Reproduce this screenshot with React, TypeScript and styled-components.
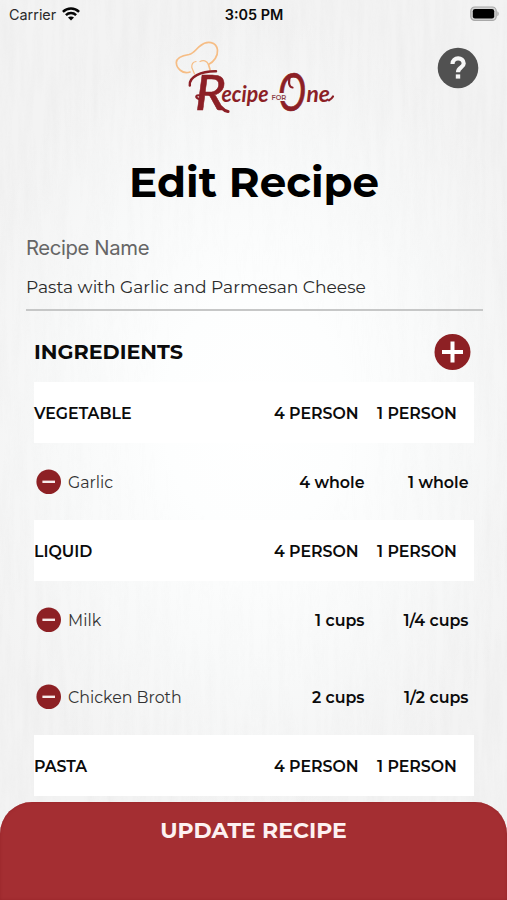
import React from "react";
import styled, { createGlobalStyle } from "styled-components";

const GlobalStyle = createGlobalStyle`
  * { box-sizing: border-box; }
  body { margin: 0; background: #f1f1f1; }
`;

const Screen = styled.div`
  position: relative;
  isolation: isolate;
  display: flex;
  flex-direction: column;
  width: 507px;
  height: 900px;
  overflow: hidden;
  color: #0b0b0b;
  font-family: "Montserrat", "Inter", sans-serif;
  background: radial-gradient(ellipse 300px 400px at 255px 415px, #ffffff 0%, #fdfefe 30%, #f8f9f9 65%, #f3f3f3 100%);
`;

const Grain = styled.svg`
  position: absolute;
  inset: 0;
  z-index: -1;
  width: 100%;
  height: 100%;
  opacity: 0.45;
  mask-image: radial-gradient(ellipse 320px 420px at 255px 415px, transparent 25%, #000 100%);
`;

const StatusBar = styled.header`
  display: grid;
  grid-template-columns: 1fr auto 1fr;
  align-items: center;
  height: 28px;
  padding: 0 8px 0 9px;
  font-family: "Inter", sans-serif;
  font-size: 14.4px;
`;

const Carrier = styled.span`
  display: flex;
  align-items: center;
  gap: 6px;
  color: #2a2a2a;
`;

const Clock = styled.time`
  font-weight: 600;
`;

const BatteryIcon = styled.svg`
  justify-self: end;
`;

const Brand = styled.div`
  display: grid;
  grid-template-columns: 1fr auto 1fr;
  height: 97px;
  padding: 8px 28px 0;
`;

const Logo = styled.svg`
  grid-column: 2;
`;

const HelpButton = styled.button`
  justify-self: end;
  width: 42px;
  height: 42px;
  margin-top: 11px;
  padding: 0;
  border: 0;
  background: none;
`;

const Title = styled.h1`
  margin: 32px 0 0;
  padding-left: 1px;
  font-size: 42px;
  line-height: 50px;
  font-weight: 700;
  text-align: center;
  color: #000;
`;

const NameField = styled.label`
  display: flex;
  flex-direction: column;
  margin: 28px 24px 0 26px;
  height: 76px;
  border-bottom: 2px solid #c6c7c7;
`;

const FieldLabel = styled.span`
  font-family: "Inter", sans-serif;
  font-size: 20.3px;
  line-height: 26px;
  letter-spacing: -0.38px;
  color: #666;
`;

const FieldValue = styled.span`
  margin-top: 15px;
  font-size: 17.1px;
  line-height: 22px;
  color: #2b2b2b;
`;

const SectionHeader = styled.div`
  display: flex;
  align-items: center;
  justify-content: space-between;
  height: 71px;
  padding: 11px 36px 0 34px;
`;

const SectionTitle = styled.h2`
  margin: 0;
  font-size: 20.7px;
  line-height: 26px;
  font-weight: 700;
`;

const IconButton = styled.button<{ $size: number }>`
  display: block;
  flex: none;
  width: ${(p) => p.$size}px;
  height: ${(p) => p.$size}px;
  padding: 0;
  border: 0;
  background: none;
`;

const IngredientList = styled.div`
  margin: 0 33px 0 34px;
`;

const GroupRow = styled.div`
  display: grid;
  grid-template-columns: 1fr 84px 80px;
  column-gap: 19px;
  align-items: center;
  height: 61px;
  padding: 1px 17px 0 0;
  background: #fff;
  font-size: 15.8px;
  font-weight: 600;
  white-space: nowrap;
`;

const ItemRow = styled.div`
  display: grid;
  grid-template-columns: 26px 1fr 90px 104px;
  align-items: center;
  height: 77px;
  padding: 1px 5.5px 0 2px;
  font-size: 15.85px;
  white-space: nowrap;
`;

const ItemName = styled.span`
  padding-left: 6px;
  color: #333;
`;

const Amount = styled.span`
  font-weight: 600;
  text-align: right;
`;

const UpdateButton = styled.button`
  flex: none;
  height: 98px;
  margin-top: auto;
  padding: 15px 0 0;
  display: flex;
  justify-content: center;
  align-items: flex-start;
  border: 0;
  border-radius: 32px 32px 0 0;
  background: #a42e32;
  box-shadow: inset 0 0 3px #96252a;
  color: #fdf1f1;
  font-family: inherit;
  font-size: 22px;
  line-height: 27px;
  font-weight: 700;
`;

type Item = { name: string; four: string; one: string };
const groups: { name: string; items: Item[] }[] = [
  { name: "VEGETABLE", items: [{ name: "Garlic", four: "4 whole", one: "1 whole" }] },
  {
    name: "LIQUID",
    items: [
      { name: "Milk", four: "1 cups", one: "1/4 cups" },
      { name: "Chicken Broth", four: "2 cups", one: "1/2 cups" },
    ],
  },
  { name: "PASTA", items: [] },
];

const WifiIcon = () => (
  <svg width="18" height="14" viewBox="0 0 18 14" fill="none" stroke="#050505" strokeWidth="2.5">
    <path d="M0.9 4.900C5.500.5 12.500.5 17.100 4.900" />
    <path d="M3.900 8.200c2.900-2.800 7.300-2.800 10.200 0" />
    <path d="M9 13.400 6 10.500c1.600-1.500 4.400-1.500 6 0z" fill="#050505" stroke="none" />
  </svg>
);

const Battery = () => (
  <BatteryIcon width="29" height="16" viewBox="0 0 29 16">
    <rect x="0.800" y="1" width="25.400" height="13.400" rx="4" fill="#d4d4d4" stroke="#a8a8a8" strokeWidth="1.200" />
    <rect x="2.800" y="3" width="21.400" height="9.400" rx="2.200" fill="#000" />
    <path d="M27.400 5.300c1.700.8 1.700 4.100 0 4.900z" fill="#a4a4a4" />
  </BatteryIcon>
);

const BrandLogo = () => (
  <Logo width="166" height="89" viewBox="170 36 166 89" role="img" aria-label="Recipe for One">
    <g fill="none" stroke="#f6bd85" strokeWidth="1.700" strokeLinecap="round" strokeLinejoin="round">
      <path d="M189 72C181 74.500 175.500 68 175.300 62.500 175.500 57 182 55.500 188 54.500 193 53.500 195 49 199 46 206 40 215.500 41.500 216.500 50 217 56 213 62 207.500 64.500L209 69.500" />
      <path d="M193.500 74 190.800 67.500C190.500 64 192 62 195 61.500M207.500 64.500C206 60.500 202 60 199 61.500" strokeWidth="1.200" />
    </g>
    <g fill="#8c1f26" fontFamily="Lato, sans-serif" fontStyle="italic" fontWeight="700">
      <text x="194" y="109.500" fontSize="49" fontWeight="500" stroke="#8c1f26" strokeWidth="0.500" textLength="31" lengthAdjust="spacingAndGlyphs">R</text>
      <text x="220.500" y="101.500" fontSize="22" textLength="47" lengthAdjust="spacingAndGlyphs">ecipe</text>
      <text x="277" y="111" fontSize="53" fontWeight="400" stroke="#8c1f26" strokeWidth="0.700" textLength="28" lengthAdjust="spacingAndGlyphs">O</text>
      <text x="305.500" y="101.500" fontSize="23" textLength="23.500" lengthAdjust="spacingAndGlyphs">ne</text>
    </g>
    <rect x="269.500" y="93" width="16.500" height="8" fill="#f3f3f3" />
    <text x="270.500" y="99.700" fontFamily="Montserrat, Inter, sans-serif" fontSize="6.700" fontWeight="600" fill="#8c4046">FOR</text>
    <g fill="none" stroke="#8c1f26" strokeLinecap="round">
      <path d="M188.800 85.500C187.500 77 200 71 215 71.200" strokeWidth="2.500" />
      <path d="M198 99C194 97.500 194.500 94.500 199 95.500" strokeWidth="2.200" />
      <path d="M220.500 107.500Q223.500 111 227 111.500" strokeWidth="3.200" />
      <path d="M328 100.300Q330.500 99 332 96.500" strokeWidth="2.200" />
      <path d="M289.500 76C287 80 287.500 87 291.500 87.500" strokeWidth="2.200" />
    </g>
  </Logo>
);

const HelpIcon = () => (
  <svg width="42" height="42" viewBox="0 0 42 42" fill="none">
    <circle cx="21" cy="21" r="20.300" fill="#515151" />
    <path d="M15.500 17C15.500 9.700 26.700 9.700 26.700 16.500 26.700 20.500 21 20.500 21 25.300" stroke="#f6f6f6" strokeWidth="4.200" />
    <rect x="18.800" y="27.400" width="4.400" height="4.200" fill="#f6f6f6" />
  </svg>
);

const AddIcon = () => (
  <svg width="37" height="37" viewBox="0 0 37 37">
    <circle cx="18.500" cy="18" r="18" fill="#8d2024" />
    <path d="M18.500 7.500v21M8 18h21" stroke="#fff" strokeWidth="4" />
  </svg>
);

const RemoveIcon = () => (
  <svg width="26" height="26" viewBox="0 0 26 26">
    <circle cx="12.700" cy="12.800" r="12.300" fill="#8d2024" />
    <path d="M6.400 12.800h12.600" stroke="#f7eaea" strokeWidth="2.400" />
  </svg>
);

export default function App() {
  return (
    <>
      <GlobalStyle />
      <Screen>
        <Grain aria-hidden="true">
          <filter id="grain" x="0" y="0" width="100%" height="100%">
            <feTurbulence type="fractalNoise" baseFrequency="0.14 0.012" numOctaves="3" seed="8" />
            <feColorMatrix values="0 0 0 0 0.5  0 0 0 0 0.5  0 0 0 0 0.5  0.35 0 0 0 -0.12" />
          </filter>
          <rect width="100%" height="100%" filter="url(#grain)" />
        </Grain>
        <StatusBar>
          <Carrier>
            Carrier <WifiIcon />
          </Carrier>
          <Clock>3:05 PM</Clock>
          <Battery />
        </StatusBar>
        <Brand>
          <BrandLogo />
          <HelpButton aria-label="Help">
            <HelpIcon />
          </HelpButton>
        </Brand>
        <Title>Edit Recipe</Title>
        <NameField>
          <FieldLabel>Recipe Name</FieldLabel>
          <FieldValue>Pasta with Garlic and Parmesan Cheese</FieldValue>
        </NameField>
        <SectionHeader>
          <SectionTitle>INGREDIENTS</SectionTitle>
          <IconButton $size={37} aria-label="Add ingredient">
            <AddIcon />
          </IconButton>
        </SectionHeader>
        <IngredientList>
          {groups.map((group) => (
            <React.Fragment key={group.name}>
              <GroupRow>
                <span>{group.name}</span>
                <span>4 PERSON</span>
                <span>1 PERSON</span>
              </GroupRow>
              {group.items.map((item) => (
                <ItemRow key={item.name}>
                  <IconButton $size={26} aria-label={`Remove ${item.name}`}>
                    <RemoveIcon />
                  </IconButton>
                  <ItemName>{item.name}</ItemName>
                  <Amount>{item.four}</Amount>
                  <Amount>{item.one}</Amount>
                </ItemRow>
              ))}
            </React.Fragment>
          ))}
        </IngredientList>
        <UpdateButton>UPDATE RECIPE</UpdateButton>
      </Screen>
    </>
  );
}
